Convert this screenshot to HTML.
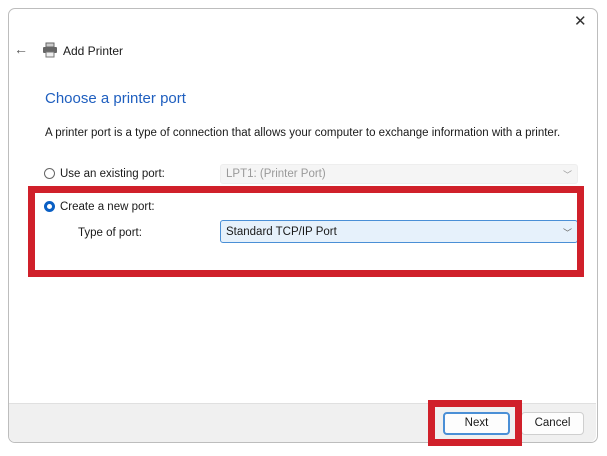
<!DOCTYPE html>
<html><head><style>
body{margin:0;width:607px;height:456px;background:#fff;position:relative;overflow:hidden;font-family:"Liberation Sans",sans-serif;font-size:11.5px;color:#1a1a1a}
.a{position:absolute}
.win{left:8px;top:8px;width:588px;height:433px;border:1px solid #bdbdbd;border-radius:7px;background:#fff}
.foot{left:9px;top:403px;width:587px;height:38px;background:#f0f0f0;border-top:1px solid #e0e0e0;border-radius:0 0 7px 7px}
.sel{height:20px;border:1px solid #d9d9d9;border-radius:3px;box-sizing:border-box;padding:3px 5px}
.btn{height:23px;border:1px solid #cfcfcf;border-radius:4px;background:#fdfdfd;box-sizing:border-box;text-align:center;line-height:21px}
.red{border:7px solid #d0202a;box-sizing:border-box}
</style></head><body>
<div class="a win"></div>
<div class="a foot"></div>
<div class="a" style="left:574px;top:12px;font-size:15px;color:#333">✕</div>
<div class="a" style="left:14px;top:41px;font-size:14px;color:#555">←</div>
<svg class="a" style="left:42px;top:42px" width="16" height="16" viewBox="0 0 16 16"><rect x="4" y="1" width="8" height="4" fill="#ccc" stroke="#666"/><rect x="1" y="5" width="14" height="6" rx="1" fill="#666"/><rect x="4" y="10" width="8" height="5" fill="#eee" stroke="#777"/></svg>
<div class="a" style="left:63px;top:44px;font-size:12px">Add Printer</div>
<div class="a" style="left:45px;top:90px;font-size:15px;color:#1f5fbf">Choose a printer port</div>
<div class="a" style="left:45px;top:127px;font-size:11.5px">A printer port is a type of connection that allows your computer to exchange information with a printer.</div>
<div class="a" style="left:44px;top:168px;width:11px;height:11px;border:1px solid #666;border-radius:50%;box-sizing:border-box"></div>
<div class="a" style="left:60px;top:168px">Use an existing port:</div>
<div class="a sel" style="left:220px;top:164px;width:358px;background:#f5f5f5;color:#9a9a9a;border-color:#eee">LPT1: (Printer Port)<span style="float:right;font-size:9px">﹀</span></div>
<div class="a" style="left:44px;top:201px;width:11px;height:11px;border:3px solid #0a5fc4;border-radius:50%;box-sizing:border-box"></div>
<div class="a" style="left:60px;top:201px">Create a new port:</div>
<div class="a" style="left:78px;top:227px">Type of port:</div>
<div class="a sel" style="left:220px;top:220px;width:358px;height:23px;padding-top:5px;background:#e6f1fb;border-color:#4a8fd6">Standard TCP/IP Port<span style="float:right;font-size:9px;color:#666">﹀</span></div>
<div class="a red" style="left:28px;top:186px;width:556px;height:91px"></div>
<div class="a btn" style="left:443px;top:412px;width:67px;border:2px solid #4a8fd6;line-height:19px">Next</div>
<div class="a btn" style="left:521px;top:412px;width:63px">Cancel</div>
<div class="a red" style="left:428px;top:400px;width:94px;height:46px"></div>
</body></html>
